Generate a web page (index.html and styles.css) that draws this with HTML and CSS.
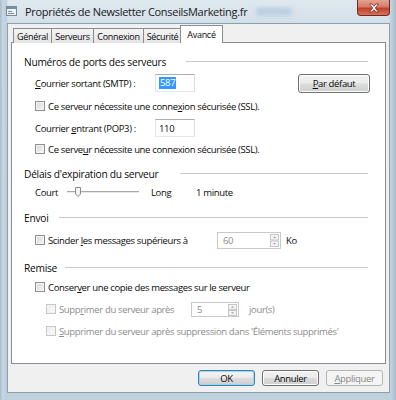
FILE: index.html
```html
<!DOCTYPE html>
<html lang="fr">
<head>
<meta charset="utf-8">
<title>Propriétés</title>
<link rel="stylesheet" href="styles.css">
</head>
<body>
<div class="window">
  <div class="titlebar">
    <svg class="ticon" width="12" height="12" viewBox="0 0 12 12">
      <rect x="0.5" y="1.5" width="10" height="9" fill="#eef1f4" stroke="#7d8a96"/>
      <rect x="1" y="2" width="9" height="2" fill="#6f8fb3"/>
      <rect x="2" y="6" width="4" height="1" fill="#7d8a96"/>
      <rect x="2" y="8" width="6" height="1" fill="#7d8a96"/>
    </svg>
    <span class="title">Propriétés de Newsletter ConseilsMarketing.fr</span>
    <span class="smudge"></span>
    <div class="close">
      <svg width="12" height="10" viewBox="0 0 12 10">
        <path d="M1.5 1 L4 1 L6 3.3 L8 1 L10.5 1 L7.3 5 L10.5 9 L8 9 L6 6.7 L4 9 L1.5 9 L4.7 5 Z" fill="#fff" stroke="#7a2a20" stroke-width="0.8" stroke-linejoin="round"/>
      </svg>
    </div>
  </div>
  <div class="client">
    <div class="tabs">
      <div class="tab t1">Général</div>
      <div class="tab t2">Serveurs</div>
      <div class="tab t3">Connexion</div>
      <div class="tab t4">Sécurité</div>
      <div class="tab active">Avancé</div>
    </div>
    <div class="panel">
      <div class="group g1"><span>Numéros de ports des serveurs</span><i class="rule"></i></div>

      <div class="row r-smtp">
        <span class="lbl w120"><span><u>C</u>ourrier sortant (SMTP) :</span></span>
        <span class="field f-port"><span class="sel">587</span></span>
        <span class="btn btn-def"><span><u>P</u>ar défaut</span></span>
      </div>
      <div class="row r-cb1">
        <span class="cb"></span><span>Ce serveur nécessite une conne<u>x</u>ion sécurisée (SSL).</span>
      </div>
      <div class="row r-pop">
        <span class="lbl w120"><span>Courrier <u>e</u>ntrant (POP3) :</span></span>
        <span class="field f-port">110</span>
      </div>
      <div class="row r-cb2">
        <span class="cb"></span><span>Ce serve<u>u</u>r nécessite une connexion sécurisée (SSL).</span>
      </div>

      <div class="group g2"><span>Délais d'expiration du serveur</span><i class="rule"></i></div>
      <div class="row r-slider">
        <span class="lbl w32">Court</span>
        <span class="slider">
          <span class="track"></span>
          <svg class="thumb" width="6" height="10" viewBox="0 0 6 10">
            <path d="M0.5 0.5 H5.5 V7 L3 9.5 L0.5 7 Z" fill="#f4f4f4" stroke="#8a8a8a"/>
          </svg>
        </span>
        <span class="lbl w45">Long</span>
        <span>1 minute</span>
      </div>

      <div class="group g3"><span>Envoi</span><i class="rule"></i></div>
      <div class="row r-split">
        <span class="lbl w182"><span class="cb"></span><span>Scinder <u>l</u>es messages supérieurs à</span></span>
        <span class="field spin s-big">60<span class="spinbtns"><svg width="9" height="13" viewBox="0 0 9 13"><rect x="0.5" y="0.5" width="8" height="5.5" fill="#f3f3f3" stroke="#c8c8c8"/><rect x="0.5" y="7" width="8" height="5.5" fill="#f3f3f3" stroke="#c8c8c8"/><path d="M3 4 L4.5 2.5 L6 4 Z" fill="#9a9a9a"/><path d="M3 9 L4.5 10.5 L6 9 Z" fill="#9a9a9a"/></svg></span></span>
        <span class="unit">Ko</span>
      </div>

      <div class="group g4"><span>Remise</span><i class="rule"></i></div>
      <div class="row r-keep">
        <span class="cb"></span><span>Conser<u>v</u>er une copie des messages sur le serveur</span>
      </div>
      <div class="row r-sub1 off">
        <span class="lbl w145"><span class="cb dis"></span><span>Supp<u>r</u>imer du serveur après</span></span>
        <span class="field spin s-small">5<span class="spinbtns"><svg width="9" height="12" viewBox="0 0 9 12"><rect x="0.5" y="0.5" width="8" height="5" fill="#f3f3f3" stroke="#c8c8c8"/><rect x="0.5" y="6.5" width="8" height="5" fill="#f3f3f3" stroke="#c8c8c8"/><path d="M3 3.8 L4.5 2.3 L6 3.8 Z" fill="#9a9a9a"/><path d="M3 8.2 L4.5 9.7 L6 8.2 Z" fill="#9a9a9a"/></svg></span></span>
        <span class="unit u-days">jour(s)</span>
      </div>
      <div class="row r-sub2 off">
        <span class="cb dis"></span><span><u>S</u>upprimer du serveur après suppression dans 'Éléments supprimés'</span>
      </div>
    </div>
    <div class="buttons">
      <span class="btn btn-main default">OK</span>
      <span class="btn btn-main">Annuler</span>
      <span class="btn btn-main disabled-btn"><span><u>A</u>ppliquer</span></span>
    </div>
  </div>
</div>
</body>
</html>
```
FILE: styles.css
```css
* { box-sizing: border-box; }
html, body { margin: 0; padding: 0; }
body {
  font-family: "Open Sans", "Noto Sans", sans-serif;
  font-size: 9.5px;
  letter-spacing: -0.35px;
  color: #0a0a0a;
  background: #fff;
}
u { text-decoration: underline; text-underline-offset: 1px; }

.window {
  width: 396px;
  height: 400px;
  padding: 0 6px 7px 7px;
  display: flex;
  flex-direction: column;
  background:
    linear-gradient(90deg, #a9bccb 0px, #c9d7e2 3px, #bccddb 6px, transparent 8px, transparent 388px, #c2d2de 391px, #a7b9c8 396px),
    linear-gradient(180deg, #dfe8ef 0px, #d3dfe8 24px, #c3d3df 200px, #bfd0dd 400px);
}

.titlebar {
  height: 23px;
  margin-left: -1px;
  display: flex;
  align-items: flex-start;
  flex: none;
}
.ticon { margin-top: 5px; flex: none; }
.title {
  margin-left: 7px;
  margin-top: 4px;
  font-size: 11px;
  letter-spacing: -0.3px;
  color: #1a1a1a;
}
.smudge {
  width: 36px;
  height: 7px;
  margin: 8px 0 0 9px;
  background: #b7cde0;
  border-radius: 4px;
  filter: blur(2px);
}
.close {
  margin-left: auto;
  width: 33px;
  height: 16px;
  border: 1px solid #6d2a22;
  border-top: none;
  border-radius: 0 0 4px 4px;
  background: linear-gradient(180deg, #e6a190 0%, #d57d6a 45%, #c2412d 55%, #d4745d 100%);
  display: flex;
  align-items: center;
  justify-content: center;
}

.client {
  flex: 1;
  display: flex;
  flex-direction: column;
  background: #f0f0f0;
  border: 1px solid #8e9daa;
  padding: 0 3px;
}

.tabs {
  height: 19px;
  margin-bottom: -1px;
  padding-left: 2px;
  display: flex;
  align-items: flex-end;
  position: relative;
  z-index: 1;
  font-size: 9px;
  letter-spacing: -0.3px;
}
.tab {
  height: 15px;
  border: 1px solid #898c95;
  border-bottom: none;
  margin-right: -1px;
  background: linear-gradient(180deg, #f4f4f4, #e4e4e4);
  display: flex;
  align-items: center;
  justify-content: center;
  line-height: 1;
}
.t1 { width: 39px; }
.t2 { width: 43px; }
.t3 { width: 51px; }
.t4 { width: 39px; }
.tab.active {
  width: 43px;
  height: 18px;
  background: #fff;
  margin-left: -1px;
  padding-bottom: 1px;
  position: relative;
}

.panel {
  height: 322px;
  flex: none;
  background: #fff;
  border: 1px solid #898c95;
  padding: 11px 17px 0 12px;
  display: flex;
  flex-direction: column;
}

.group {
  height: 16px;
  display: flex;
  align-items: center;
  flex: none;
  font-size: 10.2px;
  letter-spacing: -0.25px;
}
.rule {
  flex: 1;
  height: 1px;
  margin-top: -2px;
  background: #c9c9c9;
}
.g1 .rule { margin-left: 20px; }
.g2 { margin-top: 9px; }
.g2 .rule { margin-left: 22px; }
.g3 { margin-top: 10px; }
.g3 .rule { margin-left: 11px; }
.g4 { margin-top: 10px; }
.g4 .rule { margin-left: 8px; }

.row {
  display: flex;
  align-items: center;
  padding-left: 11px;
  height: 16px;
  flex: none;
}
.r-smtp { height: 20px; margin-top: 3px; }
.r-cb1 { margin-top: 5px; }
.r-pop { height: 20px; margin-top: 4px; }
.r-cb2 { margin-top: 3px; }
.r-slider { margin-top: 2px; }
.r-split { height: 20px; margin-top: 4px; }
.r-keep { margin-top: 3px; }
.r-sub1 { height: 20px; margin-top: 4px; padding-left: 22px; }
.r-sub2 { margin-top: 4px; padding-left: 22px; }
.off { color: #8c8c8c; }

.lbl { display: flex; align-items: center; flex: none; }
.w120 { width: 120px; }
.w32 { width: 32px; }
.w45 { width: 45px; }
.w182 { width: 182px; }
.w145 { width: 145px; }

.cb {
  width: 10px;
  height: 10px;
  flex: none;
  margin-right: 3px;
  border: 1px solid #8e8f8f;
  background: linear-gradient(135deg, #d6d6d6, #f7f7f7);
  box-shadow: inset 0 0 0 1px #f4f4f4;
}
.cb.dis {
  border-color: #c6c6c6;
  background: linear-gradient(135deg, #ececec, #fafafa);
}

.field {
  height: 18px;
  border: 1px solid #abadb3;
  border-left-color: #e2e3ea;
  border-right-color: #dbdfe6;
  border-bottom-color: #e3e9ef;
  background: #fff;
  display: flex;
  align-items: center;
  padding-left: 3px;
  flex: none;
}
.f-port { width: 40px; }
.sel {
  background: #3399ff;
  color: #fff;
  padding: 0 1px;
  line-height: 12px;
}

.btn {
  display: flex;
  align-items: center;
  justify-content: center;
  border: 1px solid #707070;
  border-radius: 3px;
  background: linear-gradient(180deg, #f3f3f3 0%, #ebebeb 48%, #dcdcdc 52%, #cfcfcf 100%);
  box-shadow: inset 0 0 0 1px #fcfcfc;
  flex: none;
}
.btn-def {
  width: 72px;
  height: 19px;
  margin-left: auto;
  margin-right: -2px;
}

.slider {
  width: 72px;
  height: 12px;
  position: relative;
  display: flex;
  align-items: center;
  margin-right: 12px;
  flex: none;
}
.track {
  width: 100%;
  height: 2px;
  border-top: 1px solid #a9a9a9;
  border-bottom: 1px solid #e8e8e8;
}
.thumb { position: absolute; left: 8px; top: 1px; }

.spin {
  position: relative;
  padding-left: 5px;
  color: #8c8c8c;
  border-color: #c9c9c9;
}
.s-big { width: 64px; height: 17px; }
.s-small { width: 48px; height: 15px; }
.spinbtns {
  position: absolute;
  right: 1px;
  top: 1px;
  display: flex;
}
.unit { margin-left: 5px; }
.u-days { margin-left: 10px; }

.buttons {
  flex: 1;
  display: flex;
  justify-content: flex-end;
  align-items: flex-start;
  gap: 7px;
  padding: 6px 3px 0 0;
}
.btn-main { width: 57px; height: 16px; }
.btn-main.default {
  border-color: #3c7fb1;
  box-shadow: inset 0 0 0 1px #9bd6f3;
}
.btn-main.disabled-btn {
  border-color: #b5b5b5;
  background: #f4f4f4;
  box-shadow: none;
  color: #888;
}
```
